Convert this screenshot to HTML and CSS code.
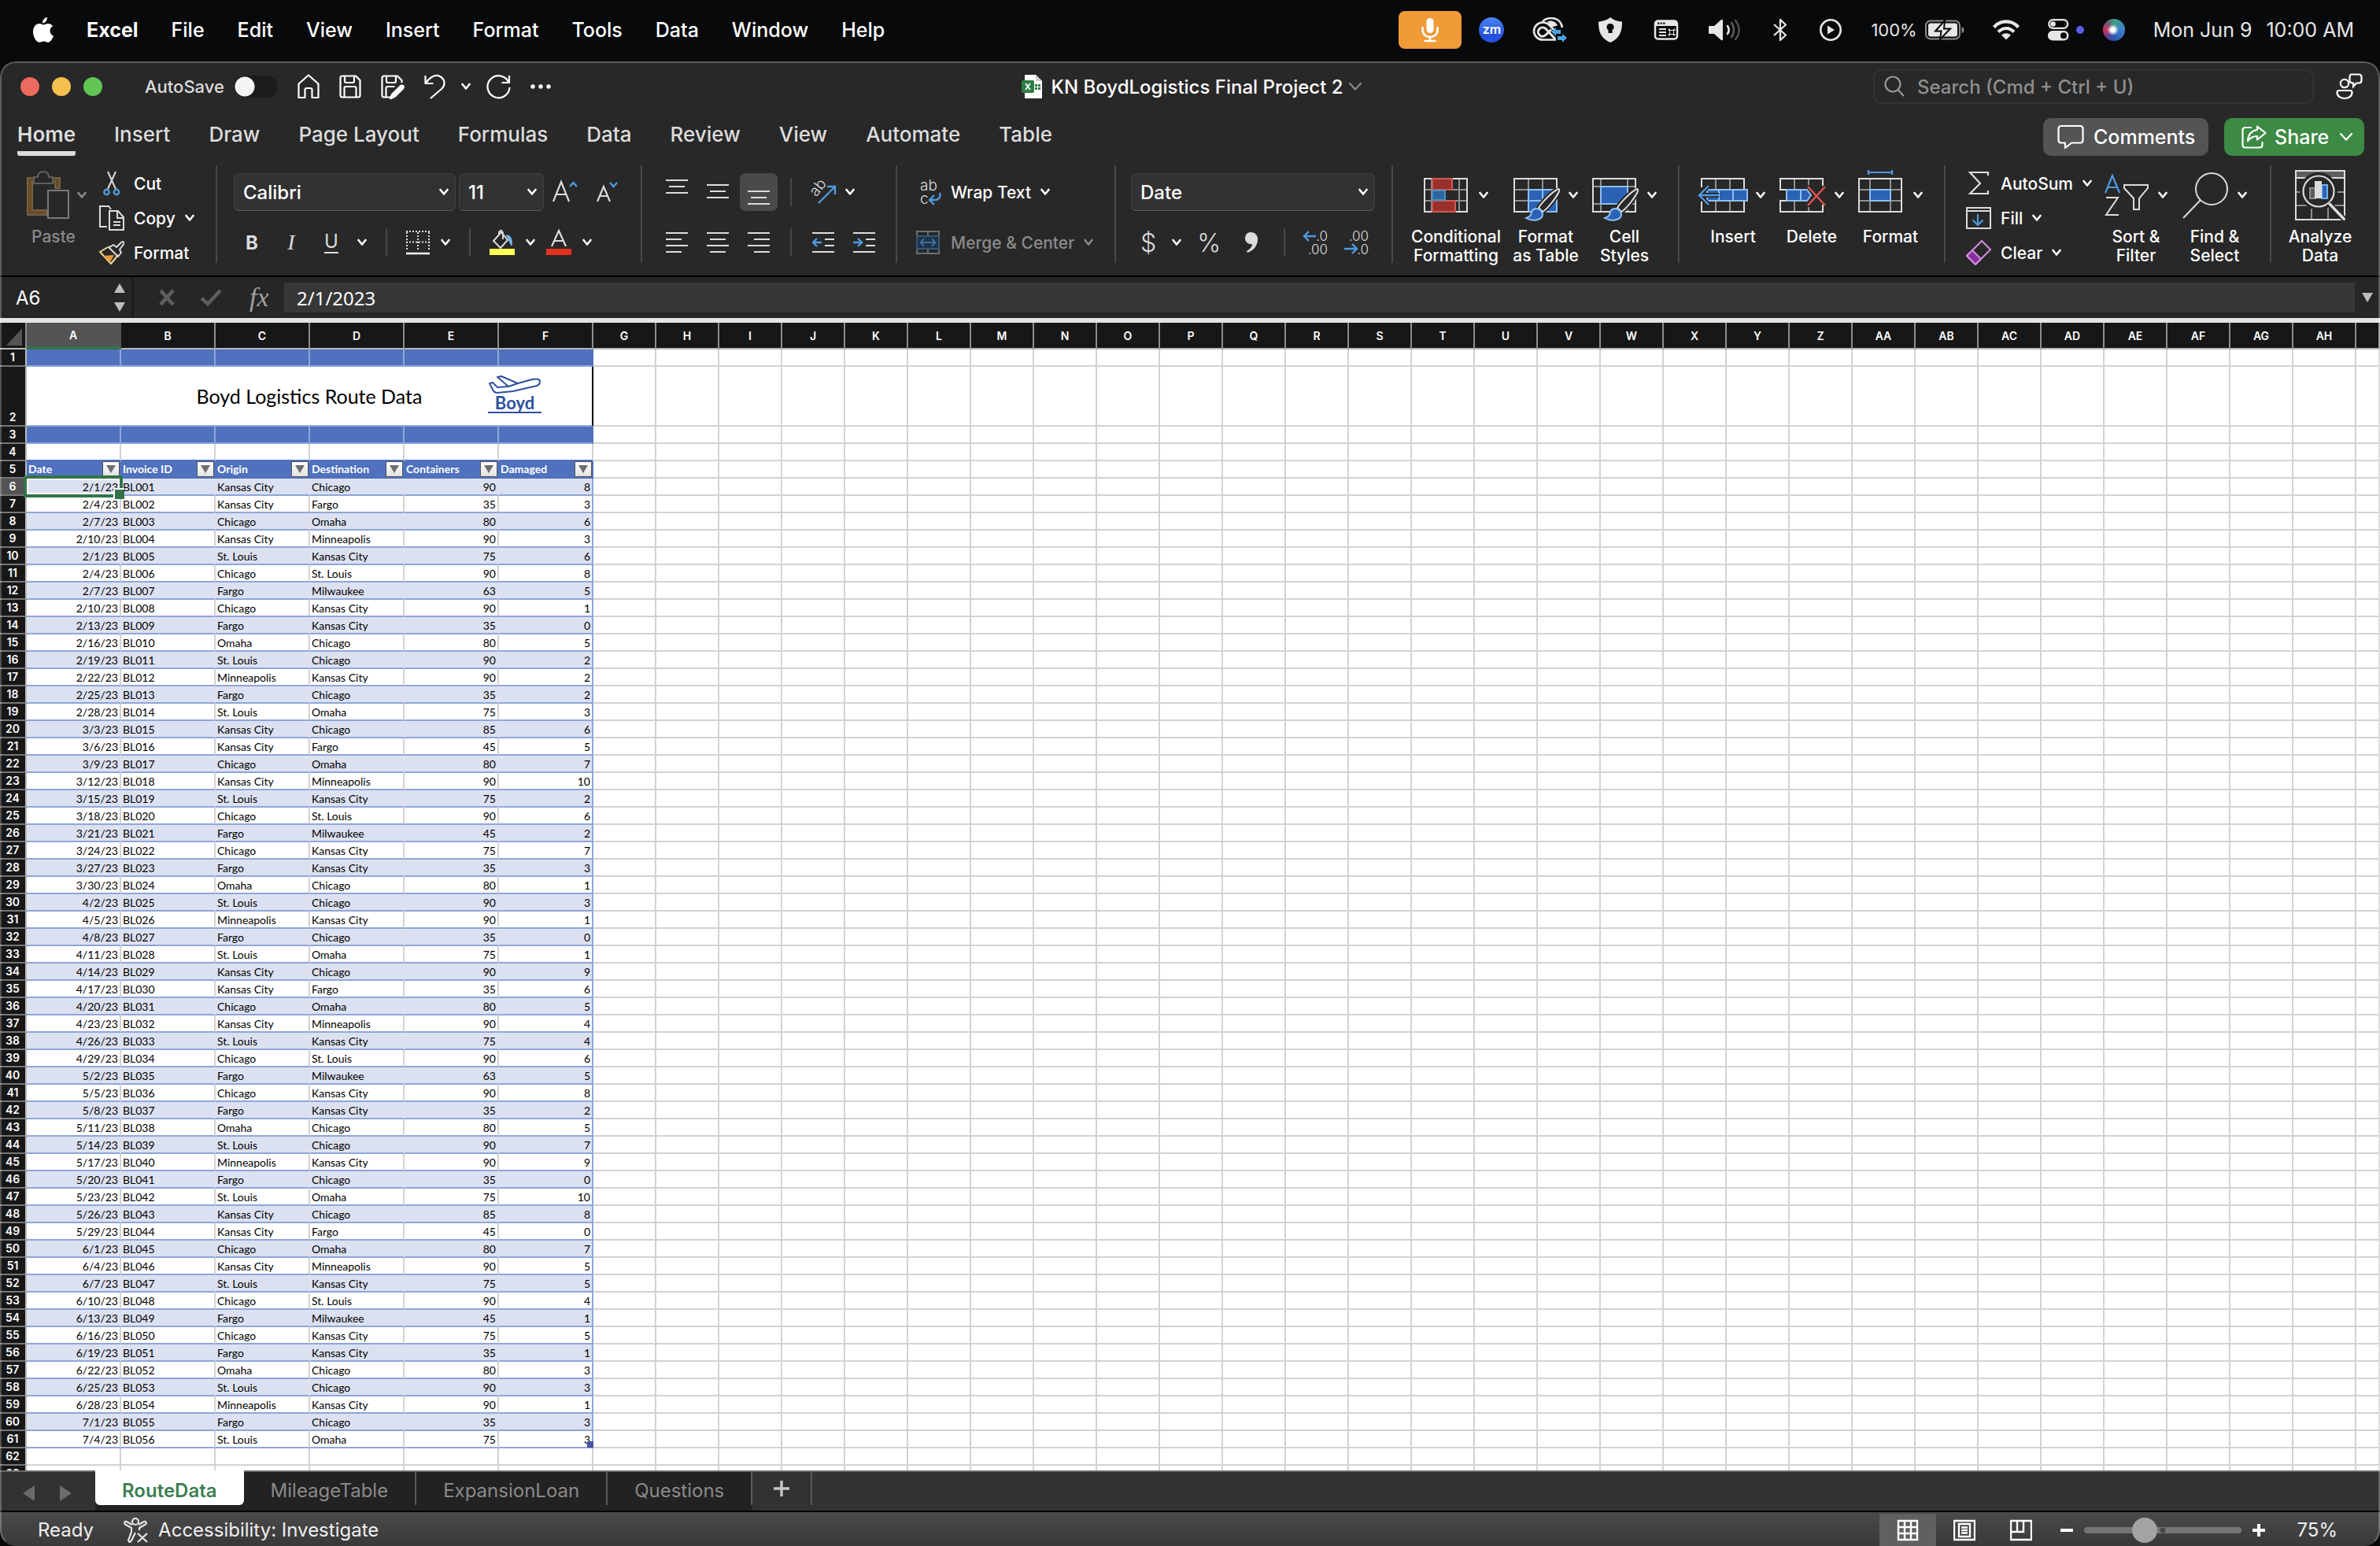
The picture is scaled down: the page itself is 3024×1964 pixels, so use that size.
FILE: index.html
```html
<!DOCTYPE html>
<html lang="en">
<head>
<meta charset="utf-8">
<title>KN BoydLogistics Final Project 2</title>
<link rel="stylesheet" href="styles.css">
</head>
<body>
<svg class="defs" aria-hidden="true">
  <symbol id="chev" viewBox="0 0 12 10"><path d="M1.5 2 6 7.5 10.500 2" fill="none" stroke="currentColor" stroke-width="2.600" stroke-linecap="round" stroke-linejoin="round"/></symbol>
  <symbol id="chev-thin" viewBox="0 0 18 12"><path d="M2 2 9 9.500 16 2" fill="none" stroke="currentColor" stroke-width="2.200" stroke-linecap="round" stroke-linejoin="round"/></symbol>
  <symbol id="brush" viewBox="0 0 46 42"><path d="M43 1C36 4 22 18 18 25l5 5C29 27 41 11 44 4c.5-2-.2-3-1-3Z" fill="#282828" stroke="#282828" stroke-width="6"/><path d="M43 1C36 4 22 18 18 25l5 5C29 27 41 11 44 4c.5-2-.2-3-1-3Z" fill="#282828" stroke="#dcdcdc" stroke-width="2"/><path d="M15 26c-6 0-6 5-7 8-1 2-3 3-6 4 8 5 20 3 21-4 0-4-3-8-8-8Z" fill="#2b62b5" stroke="#8ec0f0" stroke-width="2"/></symbol>
</svg>

<nav class="menubar" aria-label="System menu">
  <svg class="apple" width="26" height="32" viewBox="0 0 26 32"><path fill="#fff" d="M18 0c.3 3.500-2.500 7.300-6 7.400C11.600 4 14.800.3 18 0ZM19 8c2.300 0 4.600 1.200 6 3.200-5.200 3-4.300 10.400 1 12.500-1.300 3.800-4.200 8.100-7 8.100-2 0-2.800-1.300-5.400-1.300-2.600 0-3.500 1.300-5.400 1.300C4.500 31.800 0 25.500 0 18.500 0 12 3.900 8 8 8c2.200 0 4 1.500 5.500 1.500S16.600 8 19 8Z"/></svg>
  <a href="#" class="app">Excel</a><a href="#">File</a><a href="#">Edit</a><a href="#">View</a><a href="#">Insert</a><a href="#">Format</a><a href="#">Tools</a><a href="#">Data</a><a href="#">Window</a><a href="#">Help</a>
  <div class="extras">
    <span class="mic"><svg width="24" height="32" viewBox="0 0 24 32" fill="none" stroke="#fff" stroke-width="2.500" stroke-linecap="round"><rect x="7.500" y="1" width="9" height="19" rx="4.500" fill="#fff" stroke="none"/><path d="M2.500 13v3c0 12 19 12 19 0v-3M12 25v5M5.500 30h13"/></svg></span>
    <span class="zm">zm</span>
    <svg width="46" height="32" viewBox="0 0 46 32" fill="none" stroke="#e6e6e6" stroke-width="2.600"><path d="M13 5.500C16 2 20 1 24 1c8 0 13 5 14 12" /><path d="M19 5.500c5-2.500 11 0 13 5l-8 2Z" fill="#e6e6e6" stroke="none"/><path d="M30 28.500H13a11 11 0 0 1 0-22c4 0 7 1.500 9 4l9 9"/><path d="M29 27.500 17 14.500c-6-5-13 3-8 8 3 3 6 2 9-1l6-6" stroke-width="3"/><path d="M24 18l6-5v3h6v5h-6v3ZM44 26l-6-5v3h-6v5h6v3Z" fill="#4aa3df" stroke="none"/></svg>
    <svg width="34" height="32" viewBox="0 0 34 32"><path fill="#e6e6e6" fill-rule="evenodd" d="M17 0c4 3.500 9 5 15 5.500 0 11-2 21-15 26.500C4 26.500 2 16.500 2 5.500 8 5 13 3.500 17 0Zm0 8a4.500 4.500 0 0 0-2.500 8.300V20h5v-3.700A4.500 4.500 0 0 0 17 8Z"/></svg>
    <svg width="36" height="26" viewBox="0 0 36 26"><rect x="4" y="1.500" width="28" height="23" rx="3.500" fill="none" stroke="#e6e6e6" stroke-width="2.500"/><path fill="#e6e6e6" d="M4 2h28v6H4Z"/><path fill="#08090b" d="M7 3.500h2.200v2.200H7Zm3.600 0h2.200v2.200h-2.200Zm3.600 0h2.200v2.200h-2.200Z"/><path d="M9 12h9M9 16h9M9 20h9" stroke="#e6e6e6" stroke-width="2"/><path d="M22.500 13.500h5v5h-5ZM22.500 13.500h-1.500v-1.500h1.500ZM27.500 13.500v-1.500h1.500v1.500ZM22.500 18.500v1.500h-1.500v-1.500ZM27.500 18.500h1.500v1.500h-1.500Z" fill="none" stroke="#e6e6e6"/></svg>
    <svg width="42" height="28" viewBox="0 0 42 28" fill="none" stroke-width="2.600" stroke-linecap="round"><path fill="#e6e6e6" d="M1 9h6l9-8q2-1 2 1v24q0 2-2 1l-9-8H1q-1 0-1-1v-8q0-1 1-1Z"/><path stroke="#e6e6e6" d="M24 9c2 3 2 7 0 10"/><path stroke="#58595b" d="M29 5c4 5 4 13 0 18"/><path stroke="#4c4e50" d="M34 2c6 7 6 17 0 24"/></svg>
    <svg width="26" height="30" viewBox="0 0 26 30" fill="none" stroke="#e6e6e6" stroke-width="2.300" stroke-linejoin="round"><path d="M5 8 20 21.500 13 28V2l7 6.500L5 22"/></svg>
    <svg width="30" height="30" viewBox="0 0 30 30"><circle cx="15" cy="15" r="12.700" fill="none" stroke="#e6e6e6" stroke-width="2.600"/><path fill="#e6e6e6" d="M11 9.500v11l9-5.500Z"/></svg>
    <span class="battery">100%<svg width="50" height="26" viewBox="0 0 50 26"><rect x="1" y="1.500" width="43" height="23" rx="6" fill="none" stroke="#8b8b8b" stroke-width="2"/><path d="M46.500 9v8q3-1 3-4t-3-4Z" fill="#8b8b8b"/><rect x="4" y="4.500" width="37" height="17" rx="3" fill="#e6e6e6"/><path d="M25 1 13 14.500h7.500L19 25l13-13.500h-8Z" fill="#e6e6e6" stroke="#08090b" stroke-width="2"/></svg></span>
    <svg width="34" height="26" viewBox="0 0 34 26" fill="none" stroke="#e6e6e6" stroke-width="4.200"><path d="M1.500 9.500C10 0 24 0 32.500 9.500M7 15.500c6-6 14-6 20 0"/><path d="M17 25.500 11 19.500c4-3 8-3 12 0Z" fill="#e6e6e6" stroke="none"/></svg>
    <svg class="over" width="34" height="28" viewBox="0 0 34 28"><rect x="1.200" y="1.200" width="24" height="10.600" rx="5.300" fill="none" stroke="#e6e6e6" stroke-width="2.200"/><circle cx="6.500" cy="6.500" r="3.300" fill="#e6e6e6"/><rect y="15" width="26.500" height="12.500" rx="6.200" fill="#e6e6e6"/><circle cx="20" cy="21.200" r="4" fill="#08090b"/><circle cx="41" cy="14" r="5" fill="#5d5ee8"/></svg>
    <span class="siri"></span>
    <span class="clock"><span>Mon Jun 9</span><span>10:00 AM</span></span>
  </div>
</nav>

<main class="window">
  <header class="titlebar">
    <div class="quick">
      <i class="light red"></i><i class="light amber"></i><i class="light green"></i>
      <label class="autosave">AutoSave<input type="checkbox" role="switch"></label>
      <div class="quick-tools">
        <button aria-label="Home"><svg width="28" height="32" viewBox="0 0 28 32"><path d="M1.500 12.500 14 1.500l12.500 11V30h-8V20q0-2-2-2h-5q-2 0-2 2v10h-8Z"/></svg></button>
        <button aria-label="Save"><svg width="28" height="32" viewBox="0 0 28 32"><path d="M4 2.500h17l5.500 5.500v19q0 2.500-2.500 2.500H4q-2.500 0-2.500-2.500V5Q1.500 2.500 4 2.500ZM7 3v6q0 2 2 2h8q2 0 2-2V3M6.500 29V18q0-2 2-2h11q2 0 2 2v11"/></svg></button>
        <button aria-label="Save as"><svg width="30" height="32" viewBox="0 0 30 32"><path d="M13 29.500H4q-2.500 0-2.500-2.500V5q0-2.500 2.500-2.500h17l5.500 5.500v3M7 3v6q0 2 2 2h8q2 0 2-2V3M6.500 29V18q0-2 2-2h9"/><path d="m14 26 11-11q3-1.500 4 1.500l-1 2-10 10-6 3Z" fill="#fff"/></svg></button>
        <button aria-label="Undo"><svg width="28" height="32" viewBox="0 0 28 32"><path d="M1.500 2v10h10M1.500 12C8 3 14 0 20 3c7 4 7 11 2 16L8 31"/></svg></button>
        <svg class="chev" width="12" height="10"><use href="#chev"/></svg>
        <button aria-label="Redo"><svg width="32" height="32" viewBox="0 0 32 32"><path d="M30 2v9H20.500M29.500 11A14 14 0 1 0 30.500 17"/></svg></button>
        <button aria-label="More"><svg width="26" height="8" viewBox="0 0 26 8"><g fill="#fff" stroke="none"><circle cx="3" cy="4" r="2.700"/><circle cx="13" cy="4" r="2.700"/><circle cx="23" cy="4" r="2.700"/></g></svg></button>
      </div>
    </div>
    <button class="doc"><svg width="28" height="32" viewBox="0 0 28 32"><path d="M5 1h14l8 8v22H5Z" fill="#fff"/><path d="M19 1v8h8Z" fill="#cfcfcf"/><path d="M18 13h3v3h-3Zm4 0h3v3h-3Zm-4 4h3v3h-3Zm4 0h3v3h-3Z" fill="#2e7d46"/><rect x="1" y="8" width="16" height="16" rx="2" fill="#2e7d46"/><path d="m6 12 6 8m0-8-6 8" stroke="#fff" stroke-width="1.800"/></svg><span>KN BoydLogistics Final Project 2</span><svg class="dim" width="18" height="12"><use href="#chev-thin"/></svg></button>
    <div class="finder">
      <label class="search"><svg width="26" height="28" viewBox="0 0 26 28" fill="none" stroke="#9a9a9a" stroke-width="2.200"><circle cx="11" cy="11" r="9.500"/><path d="m17.500 18 7.500 8"/></svg><input type="search" placeholder="Search (Cmd + Ctrl + U)" aria-label="Search"></label>
      <button aria-label="Presence"><svg width="34" height="34" viewBox="0 0 34 34" fill="none" stroke="#fff" stroke-width="2.200"><circle cx="11" cy="13" r="5.200"/><path d="M4 22h14q2.500 0 2.500 2.500c0 10-19 10-19 0Q1.500 22 4 22ZM20 1.500h9q3.500 0 3.500 3.500v4q0 3.500-3.500 3.500h-3L22 17v-4.500q-4.500 0-4.500-3.500V5q0-3.500 2.500-3.500Z"/></svg></button>
    </div>
  </header>

  <div class="tabs">
    <nav aria-label="Ribbon tabs"><a href="#" class="on">Home</a><a href="#">Insert</a><a href="#">Draw</a><a href="#">Page Layout</a><a href="#">Formulas</a><a href="#">Data</a><a href="#">Review</a><a href="#">View</a><a href="#">Automate</a><a href="#">Table</a></nav>
    <button class="comments"><svg width="34" height="32" viewBox="0 0 34 32" fill="none" stroke="#fff" stroke-width="2.200" stroke-linejoin="round"><path d="M5 2h24q3.500 0 3.500 3.500V20q0 3.500-3.500 3.500H18L10 30v-6.500H5q-3.500 0-3.500-3.500V5.500Q1.500 2 5 2Z"/></svg>Comments</button>
    <button class="share"><svg width="32" height="30" viewBox="0 0 32 30" fill="none" stroke="#fff" stroke-width="2.200" stroke-linejoin="round"><path d="M13 3H5Q1.500 3 1.500 6.500V25q0 3.500 3.500 3.500h18q3.500 0 3.500-3.500v-4"/><path d="M20 1.500 30.500 10 20 18.500V14c-6 0-9 2-12 6 .5-8 5-13 12-14Z"/></svg>Share<svg width="18" height="12"><use href="#chev-thin"/></svg></button>
  </div>

  <section class="ribbon" aria-label="Home ribbon">
    <div class="group clipboard">
      <button class="big off"><span class="pic"><svg width="54" height="62" viewBox="0 0 54 62" fill="none" stroke-width="2"><path d="M9 9H1v47h24v-6H7V14h6v-2H9ZM33 9h9v13h-6V14h-4Z" fill="#6b4a25" stroke="#6f6248"/><path d="M9 8h5q0-7 7-7t7 7h5v8H9Z" fill="#282828" stroke="#606060"/><path d="M27 25h26v35H27Z" fill="#282828" stroke="#7a7a7a"/></svg><svg class="chev" width="12" height="10"><use href="#chev"/></svg></span>Paste</button>
      <div class="stack">
        <button class="item"><svg width="32" height="32" viewBox="0 0 32 32" fill="none" stroke="#dcdcdc" stroke-width="2"><path d="M11 1 21 23M21 1 11 23"/><g stroke="#4f9be0" stroke-width="2.400"><circle cx="9.500" cy="27" r="3.200"/><circle cx="22" cy="27" r="3.200"/></g></svg>Cut</button>
        <button class="item"><svg width="32" height="32" viewBox="0 0 32 32" fill="none" stroke="#dcdcdc" stroke-width="2"><path d="M10 27H1V1h11l3 4M13 7h11l7 8v16H13ZM23 7v9h8M18 21h9M18 25h9"/></svg>Copy<svg class="chev" width="12" height="10"><use href="#chev"/></svg></button>
        <button class="item"><svg width="32" height="32" viewBox="0 0 32 32" fill="none" stroke="#dcdcdc" stroke-width="2" stroke-linejoin="round"><path d="M11 9 1 15l14 15 9-11" fill="#282828" stroke="#f3d690"/><path d="m5 20 14-1-5 9Z" fill="#e59b3c" stroke="none"/><path d="m15 8 3-2 4 3 6-6q3-2 4 1l-6 8 2 4-4 5L12 9Z"/></svg>Format</button>
      </div>
    </div>

    <div class="group font">
      <div class="row r1">
        <span class="combo face"><select aria-label="Font"><option>Calibri</option></select><svg class="chev" width="12" height="10"><use href="#chev"/></svg></span>
        <span class="combo size"><select aria-label="Font size"><option>11</option></select><svg class="chev" width="12" height="10"><use href="#chev"/></svg></span>
        <button class="slot grow" aria-label="Increase font size"><svg width="32" height="32" viewBox="0 0 32 32" fill="none" stroke="#dcdcdc" stroke-width="2.200"><path d="M1 28 11 3l10 25M5 19h12"/><path stroke="#4f9be0" stroke-width="2.400" d="m22 9 4.500-5L31 9"/></svg></button>
        <button class="slot" aria-label="Decrease font size"><svg width="32" height="32" viewBox="0 0 32 32" fill="none" stroke="#dcdcdc" stroke-width="2.200"><path d="m3 28 8-19 8 19M6 21h10"/><path stroke="#4f9be0" stroke-width="2.400" d="m19 4 4.500 5L28 4"/></svg></button>
      </div>
      <div class="row r2">
        <button class="slot b">B</button><button class="slot i">I</button><button class="slot u"><span>U</span></button><svg class="chev" width="12" height="10"><use href="#chev"/></svg>
        <hr>
        <button aria-label="Borders"><svg width="30" height="32" viewBox="0 0 30 32" fill="none" stroke="#dcdcdc" stroke-width="2"><path stroke-dasharray="2 2" d="M0 2h30M1 3v24M29 3v24M15 3v24M0 15.500h30"/><path d="M0 30h30" stroke="#fff" stroke-width="2.500"/></svg></button><svg class="chev" width="12" height="10"><use href="#chev"/></svg>
        <hr>
        <button aria-label="Fill color"><svg width="32" height="34" viewBox="0 0 32 34" fill="none" stroke="#dcdcdc" stroke-width="2"><path d="M5 15 15 4l8 10-9 10ZM12 8V4q3-5 5 1v8"/><path d="M21 8c6-1 8 5 7 13-3-4-3-9-7-13Z" fill="#7ab8f0" stroke="#7ab8f0" stroke-width="1"/><path d="M0 25h32v8H0Z" fill="#ffff54" stroke="none"/></svg></button><svg class="chev" width="12" height="10"><use href="#chev"/></svg>
        <button aria-label="Font color"><svg width="32" height="34" viewBox="0 0 32 34" fill="none" stroke="#dcdcdc" stroke-width="2.200"><path d="m7 22 9-20 9 20M10 15h12"/><path d="M0 25h32v8H0Z" fill="#e8301e" stroke="none"/></svg></button><svg class="chev" width="12" height="10"><use href="#chev"/></svg>
      </div>
    </div>

    <div class="group align">
      <div class="row r1">
        <button class="cell" aria-label="Top align"><svg width="28" height="34" viewBox="0 0 28 34"><path d="M0 2h28M4 10h20M0 18h28"/></svg></button>
        <button class="cell" aria-label="Middle align"><svg width="28" height="34" viewBox="0 0 28 34"><path d="M0 8h28M4 16h20M0 24h28"/></svg></button>
        <button class="cell on" aria-label="Bottom align"><svg width="28" height="34" viewBox="0 0 28 34"><path d="M0 16h28M4 24h20M0 32h28"/></svg></button>
        <hr>
        <button class="cell" aria-label="Orientation"><svg class="over" width="34" height="34" viewBox="0 0 34 34"><text x="2" y="21" transform="rotate(-52 8 16)" class="glyph">ab</text><path class="blue" d="M11 31 32 10M22 10h10v10"/></svg></button><svg class="chev" width="12" height="10"><use href="#chev"/></svg>
      </div>
      <div class="row r2">
        <button class="cell" aria-label="Align left"><svg width="28" height="28" viewBox="0 0 28 28"><path d="M0 2h28M0 10h20M0 18h28M0 26h20"/></svg></button>
        <button class="cell" aria-label="Center"><svg width="28" height="28" viewBox="0 0 28 28"><path d="M0 2h28M4 10h20M0 18h28M4 26h20"/></svg></button>
        <button class="cell" aria-label="Align right"><svg width="28" height="28" viewBox="0 0 28 28"><path d="M0 2h28M8 10h20M0 18h28M8 26h20"/></svg></button>
        <hr>
        <button class="cell" aria-label="Decrease indent"><svg width="28" height="28" viewBox="0 0 28 28"><path d="M0 2h28M16 10h12M16 18h12M0 26h28"/><path class="blue" d="M12 14H1M6 9l-5 5 5 5"/></svg></button>
        <button class="cell" aria-label="Increase indent"><svg width="28" height="28" viewBox="0 0 28 28"><path d="M0 2h28M16 10h12M16 18h12M0 26h28"/><path class="blue" d="M0 14h11M6 9l5 5-5 5"/></svg></button>
      </div>
    </div>

    <div class="group wrap">
      <div class="row r1"><button class="item"><svg class="over" width="32" height="34" viewBox="0 0 32 34" fill="none"><text x="5" y="15" class="glyph">ab</text><text x="5" y="32" class="glyph">c</text><path d="M30 18c2 6-2 9-6 9h-6M23 21l-6 6 6 6" stroke="#4f9be0" stroke-width="2.400"/></svg>Wrap Text<svg class="chev" width="12" height="10"><use href="#chev"/></svg></button></div>
      <div class="row r2"><button class="item off"><svg width="32" height="32" viewBox="0 0 32 32" fill="none" stroke="#6f6f6f" stroke-width="2"><path d="M1 2h28v28H1ZM1 8h28M1 24h28M15 2v6M15 24v6"/><path d="M1 8h28v16H1Z" fill="#1e3347" stroke="#35577b"/><path d="M6 16h18M10 11.500 5.500 16l4.500 4.500M20 11.500l4.500 4.500-4.500 4.500" stroke="#45719d"/></svg>Merge &amp; Center<svg class="chev" width="12" height="10"><use href="#chev"/></svg></button></div>
    </div>

    <div class="group number">
      <div class="row r1"><span class="combo format"><select aria-label="Number format"><option>Date</option></select><svg class="chev" width="12" height="10"><use href="#chev"/></svg></span></div>
      <div class="row r2">
        <button class="sym">$</button><svg class="chev" width="12" height="10"><use href="#chev"/></svg><button class="sym pct">%</button>
        <button class="sym" aria-label="Comma style"><svg width="18" height="28" viewBox="0 0 18 28"><path d="M8 1c6 0 9 4 9 9 0 8-5 14-13 17l-1-2c5-3 7-6 7-9-5 1-9-3-9-7 0-5 3-8 7-8Z" fill="#dcdcdc"/></svg></button>
        <hr>
        <button class="dec" aria-label="Increase decimal"><svg class="over" width="34" height="34" viewBox="0 0 34 34"><text x="32" y="15" text-anchor="end" class="digits">.0</text><text x="32" y="32" text-anchor="end" class="digits">.00</text><path class="blue" d="M17 9H2M8 3 2 9l6 6"/></svg></button>
        <button class="dec" aria-label="Decrease decimal"><svg class="over" width="34" height="34" viewBox="0 0 34 34"><text x="32" y="15" text-anchor="end" class="digits">.00</text><text x="32" y="32" text-anchor="end" class="digits">.0</text><path class="blue" d="M1 25h16M11 19l6 6-6 6"/></svg></button>
      </div>
    </div>

    <div class="group styles">
      <button class="big wide"><span class="pic"><svg width="56" height="44" viewBox="0 0 56 44" fill="none" stroke="#8f8f8f" stroke-width="2"><path d="M10 1v42M45 1v42M1 15h54M1 29h54"/><path d="M1 1h54v42H1Z" stroke="#dcdcdc"/><path d="M11 1h25v14H11ZM11 29h29v14H11Z" fill="#98302c" stroke="#cf5a52"/><path d="M11 16h16v12H11Z" fill="#2f659f" stroke="#4a8fc4"/></svg><svg class="chev" width="12" height="10"><use href="#chev"/></svg></span>Conditional<br>Formatting</button>
      <button class="big"><span class="pic"><svg class="over" width="56" height="44" viewBox="0 0 56 44" fill="none" stroke="#8f8f8f" stroke-width="2"><path d="M19 1v42M37 1v42M1 15h54M1 29h54"/><path d="M1 1h54v42H1Z" stroke="#dcdcdc"/><path d="M19 15h36v28H19Z" fill="#2b62b5" stroke="#8ec0f0"/><path d="M37 15v28M19 29h36" stroke="#8ec0f0"/><use href="#brush" x="14" y="13" width="46" height="42"/></svg><svg class="chev" width="12" height="10"><use href="#chev"/></svg></span>Format<br>as Table</button>
      <button class="big"><span class="pic"><svg class="over" width="56" height="44" viewBox="0 0 56 44" fill="none" stroke="#8f8f8f" stroke-width="2"><path d="M11 1v42M45 1v42M1 11h54M1 33h54"/><path d="M1 1h54v42H1Z" stroke="#dcdcdc"/><path d="M11 11h34v22H11Z" fill="#2b62b5" stroke="#8ec0f0"/><use href="#brush" x="14" y="13" width="46" height="42"/></svg><svg class="chev" width="12" height="10"><use href="#chev"/></svg></span>Cell<br>Styles</button>
    </div>

    <div class="group cells">
      <button class="big"><span class="pic"><svg class="over" width="56" height="44" viewBox="0 0 56 44" fill="none" stroke="#8f8f8f" stroke-width="2"><path d="M19 1v42M37 1v42"/><path d="M1 12V1h54v14M1 30v13h54V29" stroke="#dcdcdc"/><path d="M8 15h51v14H8Z" fill="#2b62b5" stroke="#8ec0f0"/><path d="M23 15v14M41 15v14" stroke="#8ec0f0"/><path d="M23 22H-2M10 10-2 22l12 12" stroke="#282828" stroke-width="6"/><path d="M23 22H-2M10 10-2 22l12 12" stroke="#4f9be0" stroke-width="2.400"/></svg><svg class="chev" width="12" height="10"><use href="#chev"/></svg></span>Insert</button>
      <button class="big"><span class="pic"><svg class="over" width="56" height="44" viewBox="0 0 56 44" fill="none" stroke="#8f8f8f" stroke-width="2"><path d="M19 1v14M37 1v8M19 29v14M37 37v6"/><path d="M9 15H1V1h54v9M9 29H1v14h54v-9" stroke="#dcdcdc"/><path d="M9 15h26l5 7-5 7H9ZM27 15v14" fill="#2b62b5" stroke="#8ec0f0"/><path d="m36 11 22 24M58 11 36 35" stroke="#e0524c" stroke-width="2.400"/></svg><svg class="chev" width="12" height="10"><use href="#chev"/></svg></span>Delete</button>
      <button class="big"><span class="pic"><svg class="over" width="56" height="44" viewBox="0 0 56 44" fill="none" stroke="#8f8f8f" stroke-width="2"><path d="M15 1v42M41 1v42M1 15h54M1 29h54"/><path d="M1 1h54v42H1Z" stroke="#dcdcdc"/><path d="M15 15h26v14H15Z" fill="#2b62b5" stroke="#8ec0f0"/><path d="M13-7h30M13-10v6M43-10v6" stroke="#4f9be0" stroke-width="2.200"/></svg><svg class="chev" width="12" height="10"><use href="#chev"/></svg></span>Format</button>
    </div>

    <div class="group editing">
      <div class="stack">
        <button class="item"><svg width="32" height="32" viewBox="0 0 32 32" fill="none" stroke="#dcdcdc" stroke-width="2.200"><path d="M28 6V2H5l13 14L5 29h23v-4"/></svg>AutoSum<svg class="chev" width="12" height="10"><use href="#chev"/></svg></button>
        <button class="item"><svg width="32" height="32" viewBox="0 0 32 32" fill="none" stroke="#dcdcdc" stroke-width="2"><path d="M1 3h30v26H1ZM1 7h30"/><path d="M15 11v14M8.500 18.500 15 25l6.500-6.500" stroke="#4f9be0" stroke-width="2.200"/></svg>Fill<svg class="chev" width="12" height="10"><use href="#chev"/></svg></button>
        <button class="item"><svg width="32" height="32" viewBox="0 0 32 32" fill="none" stroke="#d08fe0" stroke-width="2"><path d="M20 1 31 12 12 31 1 20Z"/><path d="m8 13 11 11-7 7L1 20Z" fill="#8a2f9e"/></svg>Clear<svg class="chev" width="12" height="10"><use href="#chev"/></svg></button>
      </div>
      <button class="big"><span class="pic"><svg width="56" height="54" viewBox="0 0 56 54" fill="none" stroke="#dcdcdc" stroke-width="2"><path d="M1 24 10 2l9 22M4 17h12" stroke="#4f9be0" stroke-width="2.200"/><path d="M2 30h15L2 52h16M25 14h30v4L44 31v14h-7V31L25 18Z"/></svg><svg class="chev" width="12" height="10"><use href="#chev"/></svg></span>Sort &amp;<br>Filter</button>
      <button class="big"><span class="pic"><svg width="58" height="60" viewBox="0 0 58 60" fill="none" stroke="#dcdcdc" stroke-width="2"><circle cx="37" cy="22" r="20"/><path d="M23 36 1 59"/></svg><svg class="chev" width="12" height="10"><use href="#chev"/></svg></span>Find &amp;<br>Select</button>
    </div>

    <div class="group analyze">
      <button class="big"><span class="pic"><svg width="64" height="64" viewBox="0 0 64 64" fill="none" stroke="#8f8f8f" stroke-width="2"><path d="M1 1h62v9H1Z" fill="#5c5c5c"/><path d="M1 28h62M1 45h62M21 45v18M42 45v18"/><path d="M1 1h62v62H1ZM1 10h62" stroke="#dcdcdc"/><circle cx="30" cy="27" r="23" fill="#282828" stroke="#282828"/><circle cx="30" cy="27" r="19.500" stroke="#dcdcdc" stroke-width="2.200"/><path d="m43 42 20 21" stroke="#282828" stroke-width="7"/><path d="m43 42 20 21" stroke="#dcdcdc" stroke-width="3.500"/><path d="M19 23h7v13h-7Z" fill="#5c5c5c"/><path d="M34 19h7v17h-7Z" fill="#2b62b5" stroke="#6fb0ee"/><path d="M25 14h9v22h-9Z" fill="#dcdcdc" stroke="none"/></svg></span>Analyze<br>Data</button>
    </div>
  </section>

  <form class="formula">
    <label class="namebox"><input value="A6" aria-label="Name box"><svg width="16" height="38" viewBox="0 0 16 38"><path fill="#bdbdbd" d="m8 1 7 12H1ZM8 37 1 25h14Z"/></svg></label>
    <button type="button" aria-label="Cancel"><svg width="22" height="22" viewBox="0 0 22 22"><path d="m3 2 16 18M19 2 3 20" stroke="#5e5e5e" stroke-width="4.500"/></svg></button>
    <button type="button" aria-label="Enter"><svg width="28" height="22" viewBox="0 0 28 22"><path d="m2 12 8 7L26 2" fill="none" stroke="#5e5e5e" stroke-width="4.500"/></svg></button>
    <button type="button" class="fx">fx</button>
    <input class="entry" value="2/1/2023" aria-label="Formula">
    <svg class="expand" width="16" height="14" viewBox="0 0 16 14"><path fill="#bdbdbd" d="M1 1h14L8 13Z"/></svg>
  </form>

  <div class="sheet"><table class="grid" id="grid"></table></div>

  <footer class="sheets">
    <svg class="arrows" width="62" height="20" viewBox="0 0 62 20"><path fill="#6b6b6b" d="M15 0v20L0 10ZM47 0v20l15-10Z"/></svg>
    <nav aria-label="Sheets"><a href="#" class="on">RouteData</a><a href="#">MileageTable</a><a href="#">ExpansionLoan</a><a href="#">Questions</a></nav>
    <button class="add" aria-label="Add sheet"><svg width="20" height="20" viewBox="0 0 20 20"><path d="M10 0v20M0 10h20" stroke="#c4c4c4" stroke-width="3.500"/></svg></button>
  </footer>

  <footer class="status">
    <span>Ready</span>
    <button class="access"><svg width="32" height="32" viewBox="0 0 32 32" fill="none" stroke="#e4e4e4" stroke-width="2.200" stroke-linejoin="round"><circle cx="15" cy="5" r="4"/><path d="M4 5c-3-1-4 3-1 4l7 4v5L6 29c1 3 3 2 4 0l5-10M26 5c3-1 4 3 1 4l-7 4v3M4 5l7 4M26 5l-7 4M18 20l12 11M30 20 18 31"/></svg>Accessibility: Investigate</button>
    <div class="views">
      <button class="on" aria-label="Normal"><svg width="28" height="28" viewBox="0 0 28 28"><path d="M2 2h24v24H2ZM2 10h24M2 18h24M10 2v24M18 2v24"/></svg></button>
      <button aria-label="Page layout"><svg width="28" height="28" viewBox="0 0 28 28"><path d="M1 2h26v24H1ZM7 6h14v16H7ZM10 10.500h8M10 14h8M10 17.500h8"/></svg></button>
      <button aria-label="Page break"><svg width="28" height="28" viewBox="0 0 28 28"><path d="M1 2h26v24H1ZM1 16h16V2M9 2v14"/></svg></button>
    </div>
    <button class="zoom" aria-label="Zoom out"><svg width="16" height="16" viewBox="0 0 16 16"><path d="M0 8h16" stroke="#fff" stroke-width="4"/></svg></button>
    <input type="range" aria-label="Zoom" min="0" max="100" value="36">
    <button class="zoom" aria-label="Zoom in"><svg width="16" height="16" viewBox="0 0 16 16"><path d="M0 8h16M8 0v16" stroke="#fff" stroke-width="4"/></svg></button>
    <span class="percent">75%</span>
  </footer>
</main>
<script src="script.js"></script>
</body>
</html>
```
FILE: styles.css
```css
* { box-sizing: border-box; }
body {
  margin: 0;
  height: 100vh;
  display: flex;
  flex-direction: column;
  gap: 2px;
  overflow: hidden;
  background: #08090b;
  color: #fff;
  font-family: Inter, "Liberation Sans", sans-serif;
}
a { color: inherit; text-decoration: none; }
button, input, select { font: inherit; color: inherit; background: none; border: 0; padding: 0; margin: 0; }
input, select { outline: 0; min-width: 0; }
button { display: flex; align-items: center; white-space: nowrap; }
svg { display: block; flex: none; }
.over { overflow: visible; }
.defs { position: absolute; width: 0; height: 0; }
.chev { color: #fff; }

/* System menu bar */
.menubar {
  flex: 0 0 76px;
  display: flex;
  align-items: center;
  gap: 42px;
  padding: 0 33px 0 42px;
  font-size: 25px;
  font-weight: 500;
  white-space: nowrap;
}
.app { font-weight: 700; }
.extras { margin-left: auto; display: flex; align-items: center; gap: 36px; color: #e6e6e6; font-weight: 400; }
.mic { width: 80px; height: 48px; border-radius: 8px; background: #f09a38; display: grid; place-items: center; margin-right: -14px; }
.zm { width: 32px; height: 32px; border-radius: 50%; background: linear-gradient(#4a86f5, #2452dc 70%); color: #fff; font-size: 16px; font-weight: 600; line-height: 30px; text-align: center; }
.battery { display: flex; align-items: center; gap: 10px; font-size: 22px; }
.siri { width: 28px; height: 28px; border-radius: 50%; background: radial-gradient(circle at 45% 50%, #fff 0 12%, transparent 35%), conic-gradient(#3f9f86, #3f7fd0 25%, #2c58b0 50%, #5a3f93 62%, #d4335f 75%, #6b5a70 88%, #3f9f86); }
.clock { display: flex; gap: 18px; }

/* Window */
.window {
  position: relative;
  flex: 1;
  min-height: 0;
  display: flex;
  flex-direction: column;
  padding-top: 2px;
  border-radius: 20px;
  overflow: hidden;
  background: #282828;
}
.window::after { content: ""; position: absolute; inset: 0; border: 2px solid rgba(255, 255, 255, .25); border-bottom-color: transparent; border-radius: inherit; pointer-events: none; }
.titlebar { flex: 0 0 60px; display: grid; grid-template-columns: 1fr auto 1fr; align-items: center; padding: 0 22px 0 26px; }
.quick, .quick-tools, .finder { display: flex; align-items: center; }
.light { width: 24px; height: 24px; border-radius: 50%; margin-right: 16px; }
.red { background: #ed6a5e; }
.amber { background: #f4bf4f; }
.green { background: #61c554; }
.autosave { display: flex; align-items: center; gap: 12px; margin-left: 38px; color: #dcdcdc; font-size: 22px; font-weight: 500; }
.autosave input { appearance: none; width: 56px; height: 28px; border-radius: 14px; background: radial-gradient(circle at 14px 14px, #f4f4f4 12px, transparent 13px), #1c1c1c; }
.quick-tools { gap: 25px; margin-left: 25px; }
.quick-tools button svg { fill: none; stroke: #fff; stroke-width: 2.2; stroke-linejoin: round; }
.quick-tools .chev { margin: 0 -6px; }
.doc { gap: 10px; font-size: 24px; font-weight: 500; }
.doc svg.dim { color: #8a8a8a; margin-left: -4px; }
.finder { justify-content: flex-end; gap: 28px; }
.search { width: 560px; height: 44px; border: 2px solid #333; border-radius: 10px; display: flex; align-items: center; gap: 16px; padding: 0 12px; font-size: 24px; font-weight: 500; }
.search input { flex: 1; }
.search input::placeholder { color: #8f8f8f; opacity: 1; }

/* Ribbon tabs */
.tabs { flex: 0 0 62px; display: flex; align-items: center; gap: 20px; padding: 0 20px 0 22px; font-size: 26px; font-weight: 500; }
.tabs nav { flex: 1; display: flex; gap: 49px; color: #dcdcdc; }
.tabs nav a { line-height: 38px; padding: 8px 0 2px; border-bottom: 6px solid transparent; white-space: nowrap; }
.tabs nav .on { font-weight: 600; border-color: #dcdcdc; border-radius: 3px; }
.comments, .share { height: 48px; margin-top: 6px; border-radius: 10px; padding: 0 18px; gap: 12px; font-size: 25px; }
.comments { width: 210px; background: #545454; }
.share { width: 178px; padding: 0 14px 0 22px; gap: 10px; background: #3c8a43; }
.share svg:last-child { margin-left: auto; }

/* Ribbon */
.ribbon { flex: 0 0 150px; min-height: 0; display: flex; padding: 8px 0 16px; border-bottom: 2px solid #000; font-size: 21px; font-weight: 500; }
.group { flex: none; border-right: 2px solid #484848; }
.clipboard, .styles, .cells, .editing, .analyze { display: flex; align-items: flex-start; height: 124px; }
.clipboard { width: 276px; padding-left: 22px; }
.font { width: 540px; padding-left: 21px; }
.align { width: 324px; padding-left: 20px; }
.wrap { width: 278px; padding-left: 24px; }
.number { width: 352px; padding-left: 19px; }
.styles { width: 364px; padding-left: 16px; }
.cells { width: 338px; padding-left: 18px; }
.editing { width: 414px; padding-left: 26px; }
.analyze { flex: 1; border: 0; padding-left: 12px; }
.row { display: flex; align-items: center; }
.r1 { height: 48px; margin-top: 10px; }
.r2 { height: 36px; margin-top: 22px; }
hr { width: 2px; height: 36px; margin: 0 10px; border: 0; background: #484848; }
.off { color: #8a8a8a; }
.off .chev { color: #8a8a8a; }
.big { flex: none; width: 100px; flex-direction: column; justify-content: flex-start; padding-top: 6px; line-height: 24px; text-align: center; }
.big.wide { width: 128px; }
.pic { height: 64px; margin-bottom: 9px; display: flex; align-items: center; gap: 14px; }
.editing .pic { gap: 12px; }
.clipboard .big { padding-right: 8px; }
.clipboard .pic { gap: 10px; margin-right: -8px; }
.stack { display: flex; flex-direction: column; padding-top: 1px; }
.clipboard .stack { margin-left: 4px; }
.editing .stack { width: 166px; }
.item { height: 44px; gap: 12px; }
.combo { display: grid; height: 48px; border: 1px solid #424242; border-bottom-color: #5c5c5c; border-radius: 7px; background: #323232; font-size: 24px; align-items: center; }
.combo > * { grid-area: 1 / 1; }
.combo select { appearance: none; width: 100%; padding-left: 11px; }
.combo svg { justify-self: end; margin-right: 8px; pointer-events: none; }
.face { width: 282px; margin-right: 4px; }
.size { width: 108px; }
.format { width: 310px; }
.slot { width: 36px; justify-content: center; font-size: 24px; color: #dcdcdc; }
.r1 .slot { width: 54px; }
.font .r2 { gap: 14px; padding-left: 5px; }
.b { font-weight: 700; }
.i { font-family: "Liberation Serif", serif; font-style: italic; font-size: 28px; }
.u { width: 38px; font-weight: 400; }
.u span { border-bottom: 2px solid #dcdcdc; line-height: 26px; }
.align .row { gap: 4px; }
.align hr { margin: 0 12px; }
.cell { width: 48px; height: 48px; border-radius: 7px; justify-content: center; }
.cell.on { background: #4a4a4a; }
.cell path { fill: none; stroke: #dcdcdc; stroke-width: 2; }
path.blue, .cell path.blue { fill: none; stroke: #4f9be0; stroke-width: 2.4; }
.glyph { fill: #dcdcdc; font-size: 19px; font-weight: 300; }
.digits { fill: #dcdcdc; font-size: 17px; font-weight: 300; }
.sym { color: #dcdcdc; font-size: 32px; font-weight: 300; }
.number .r2 { gap: 20px; padding-left: 12px; }
.number .pct { margin-right: 10px; }
.number hr { margin: 0 2px 0 12px; }
.dec + .dec { margin-left: -2px; }

/* Formula bar */
.formula { flex: 0 0 58px; display: flex; align-items: center; border-bottom: 6px solid #e4e4e4; padding-right: 8px; font-size: 24px; background: #262626; }
.namebox { width: 170px; height: 100%; display: flex; align-items: center; padding: 0 7px 0 20px; border-right: 3px solid #1c1c1c; }
.namebox input { flex: 1; }
.formula button { margin-left: 31px; }
.formula .fx { width: 48px; padding-left: 4px; color: #a0a0a0; font: italic 34px/36px "Liberation Serif", serif; }
.entry { flex: 1; height: 38px; padding-left: 16px; background: #373737; font-family: "Noto Sans", sans-serif; }
.expand { margin-left: 8px; }

/* Worksheet */
.sheet { flex: 1; min-height: 0; overflow: hidden; background: #fff; }
.grid { width: 100%; table-layout: fixed; border-collapse: separate; border-spacing: 0; color: #000; font: 14px/18px Lato, "Liberation Sans", sans-serif; }
.grid col.num { width: 34px; }
.grid col.wide { width: 120px; }
.grid col.std { width: 80px; }
.grid td, .grid th { height: 22px; padding: 2px 2px 0; border-right: 2px solid #d2d2d2; border-bottom: 2px solid #d2d2d2; white-space: nowrap; overflow: visible; }
.grid thead th { height: 34px; padding: 0; background: #171717; color: #fff; border-color: #8c8c8c #8c8c8c #b8b8b8; font: 600 14px Inter, sans-serif; }
.grid thead th.on { background: #545454; border-right-color: #545454; border-bottom: 4px solid #33734a; }
.grid tbody th.n { padding: 0; background: #171717; color: #fff; border-color: #b8b8b8; border-bottom-color: #777; font: 600 14px/20px Inter, sans-serif; text-align: center; vertical-align: bottom; }
.grid tbody th.n.on { background: #545454; }
.grid .tall td, .grid .tall th { height: 76px; }
.grid .bar td.in { background: #4f71be; border-color: #8ea6d9; }
.grid .bar td.last { border-right-color: #4f71be; }
.grid td.title { position: relative; padding: 0; border-right-color: #000; border-bottom-color: #8ea6d9; font-size: 25px; text-align: center; }
.logo { position: absolute; left: 586px; top: 11px; width: 68px; color: #2f519e; font-size: 22px; line-height: 22px; }
.logo span { display: block; border-bottom: 2px solid #2f519e; font-weight: 700; }
.grid .gap td.in { border-bottom-color: #4f71be; }
.grid th.field { padding: 0 0 0 2px; background: #4f71be; border-color: #4f71be; color: #fff; font-weight: 700; text-align: left; }
.field div { display: flex; align-items: center; justify-content: space-between; height: 20px; }
.field button { width: 22px; height: 20px; justify-content: center; background: linear-gradient(#fff, #e2e2e2); border: 1px solid #555; }
.grid .rec td.in { border-bottom-color: #8ea6d9; }
.grid .band td.in { background: #dce1f1; border-right-color: #dce1f1; }
.grid .rec td.last { border-right-color: #8ea6d9; }
.grid .r { text-align: right; }
.grid .pick, .grid .end { position: relative; }
.pick::before { content: ""; position: absolute; inset: -4px; border: 4px solid #33734a; box-shadow: inset 0 0 0 2px #fff; }
.pick::after { content: ""; position: absolute; right: -6px; bottom: -6px; width: 12px; height: 12px; background: #33734a; border: solid #fff; border-width: 2px 0 0 2px; }
.end::after { content: ""; position: absolute; right: -2px; bottom: -1px; width: 8px; height: 8px; background: #4556a5; }

/* Sheet tabs */
.sheets { flex: 0 0 53px; display: flex; align-items: flex-start; background: #323232; border-top: 2px solid #6a6a6a; border-bottom: 2px solid #000; color: #8a8a8a; font-size: 24px; }
.arrows { margin: 17px 30px 0 29px; }
.sheets nav { display: flex; height: 49px; background: #222; }
.sheets nav a { height: 42px; line-height: 48px; padding: 0 34px; border-right: 2px solid #5a5a5a; }
.sheets nav .on { height: 44px; margin-top: -2px; line-height: 52px; background: #fff; color: #3b7f52; font-weight: 600; border: 0; border-radius: 0 0 6px 6px; }
.add { height: 42px; padding: 0 27px; border-right: 2px solid #5a5a5a; }

/* Status bar */
.status { flex: 0 0 43px; display: flex; align-items: center; padding: 2px 54px 0 48px; background: linear-gradient(#4a4a4a, #393939); border-radius: 0 0 20px 20px; font-size: 24px; color: #efefef; }
.access { gap: 12px; margin-left: 38px; }
.views { display: flex; height: 100%; margin-left: auto; margin-right: 14px; }
.views button { width: 72px; justify-content: center; }
.views .on { background: #606060; }
.views path { fill: none; stroke: #fff; stroke-width: 2.4; }
.status input { appearance: none; width: 200px; height: 32px; margin: 0 14px; }
.status input::-webkit-slider-runnable-track { height: 8px; border-radius: 4px; background: radial-gradient(circle, #444 3px, transparent 4px), #757575; }
.status input::-webkit-slider-thumb { appearance: none; width: 32px; height: 32px; margin-top: -12px; border-radius: 50%; background: #a3a3a3; }
.percent { margin-left: 40px; }
```
FILE: script.js
```js
// Routes repeat in a fixed fourteen-leg cycle.
const routes = [
  ["Kansas City", "Chicago"], ["Kansas City", "Fargo"], ["Chicago", "Omaha"], ["Kansas City", "Minneapolis"],
  ["St. Louis", "Kansas City"], ["Chicago", "St. Louis"], ["Fargo", "Milwaukee"], ["Chicago", "Kansas City"],
  ["Fargo", "Kansas City"], ["Omaha", "Chicago"], ["St. Louis", "Chicago"], ["Minneapolis", "Kansas City"],
  ["Fargo", "Chicago"], ["St. Louis", "Omaha"]
];
// date, containers, damaged
const loads = `2/1 90 8,2/4 35 3,2/7 80 6,2/10 90 3,2/1 75 6,2/4 90 8,2/7 63 5,2/10 90 1,2/13 35 0,2/16 80 5,2/19 90 2,2/22 90 2,2/25 35 2,2/28 75 3,
3/3 85 6,3/6 45 5,3/9 80 7,3/12 90 10,3/15 75 2,3/18 90 6,3/21 45 2,3/24 75 7,3/27 35 3,3/30 80 1,4/2 90 3,4/5 90 1,4/8 35 0,4/11 75 1,
4/14 90 9,4/17 35 6,4/20 80 5,4/23 90 4,4/26 75 4,4/29 90 6,5/2 63 5,5/5 90 8,5/8 35 2,5/11 80 5,5/14 90 7,5/17 90 9,5/20 35 0,5/23 75 10,
5/26 85 8,5/29 45 0,6/1 80 7,6/4 90 5,6/7 75 5,6/10 90 4,6/13 45 1,6/16 75 5,6/19 35 1,6/22 80 3,6/25 90 3,6/28 90 1,7/1 35 3,7/4 75 3`
  .split(",").map(s => s.trim().split(" "));
const fields = ["Date", "Invoice ID", "Origin", "Destination", "Containers", "Damaged"];
const COLS = 35, USED = 6, LAST_ROW = 63;
const letter = i => (i < 26 ? "" : "A") + String.fromCharCode(65 + i % 26);
const repeat = (n, f) => Array.from({ length: n }, (_, i) => f(i)).join("");
const plain = repeat(COLS - USED, () => "<td></td>");
const used = f => repeat(USED, i => `<td class="in${i === USED - 1 ? " last" : ""}">${f ? f(i) : ""}</td>`);
const arrow = '<svg width="12" height="12" viewBox="0 0 12 12"><path d="M0 1h12L6 11Z" fill="#6e6e6e"/></svg>';
const logo = `<div class="logo"><svg width="68" height="24" viewBox="0 0 68 24" fill="none" stroke="#2f519e" stroke-width="2" stroke-linejoin="round"><path d="M2 10 6 9l6 6 14-1L12 2l5-1 21 9 18-5q10-2 10 3t-8 6L32 20 12 22Q8 22 6 18ZM26 14l12-4"/></svg><span>Boyd</span></div>`;

function row(n) {
  const head = `<th scope="row" class="n${n === 6 ? " on" : ""}">${n}</th>`;
  if (n === 1 || n === 3) return `<tr class="bar">${head}${used()}${plain}</tr>`;
  if (n === 2) return `<tr class="tall">${head}<td class="title" colspan="6">Boyd Logistics Route Data${logo}</td>${plain}</tr>`;
  if (n === 4) return `<tr class="gap">${head}${used()}${plain}</tr>`;
  if (n === 5) return `<tr>${head}${fields.map(f => `<th scope="col" class="field"><div>${f}<button aria-label="Filter ${f}">${arrow}</button></div></th>`).join("")}${plain}</tr>`;
  const i = n - 6;
  if (i >= loads.length) return `<tr>${head}${used().replace(/ class="[^"]*"/g, "")}${plain}</tr>`;
  const [date, containers, damaged] = loads[i];
  const values = [date + "/23", "BL" + String(i + 1).padStart(3, "0"), ...routes[i % 14], containers, damaged];
  const cells = values.map((v, c) => {
    const cls = ["in"];
    if (c === 0 || c > 3) cls.push("r");
    if (c === 5) cls.push("last");
    if (i === 0 && c === 0) cls.push("pick");
    if (i === loads.length - 1 && c === 5) cls.push("end");
    return `<td class="${cls.join(" ")}">${v}</td>`;
  }).join("");
  return `<tr class="rec${i % 2 ? "" : " band"}">${head}${cells}${plain}</tr>`;
}

document.getElementById("grid").innerHTML =
  `<colgroup><col class="num">${repeat(COLS - 1, i => `<col class="${i < USED ? "wide" : "std"}">`)}<col></colgroup>` +
  `<thead><tr><th class="corner"><svg width="32" height="30" viewBox="0 0 32 30"><path d="M28 6v22H8Z" fill="#545454"/></svg></th>` +
  repeat(COLS, i => `<th scope="col"${i === 0 ? ' class="on"' : ""}>${i < 34 ? letter(i) : ""}</th>`) + "</tr></thead>" +
  `<tbody>${repeat(LAST_ROW, i => row(i + 1))}</tbody>`;
```
